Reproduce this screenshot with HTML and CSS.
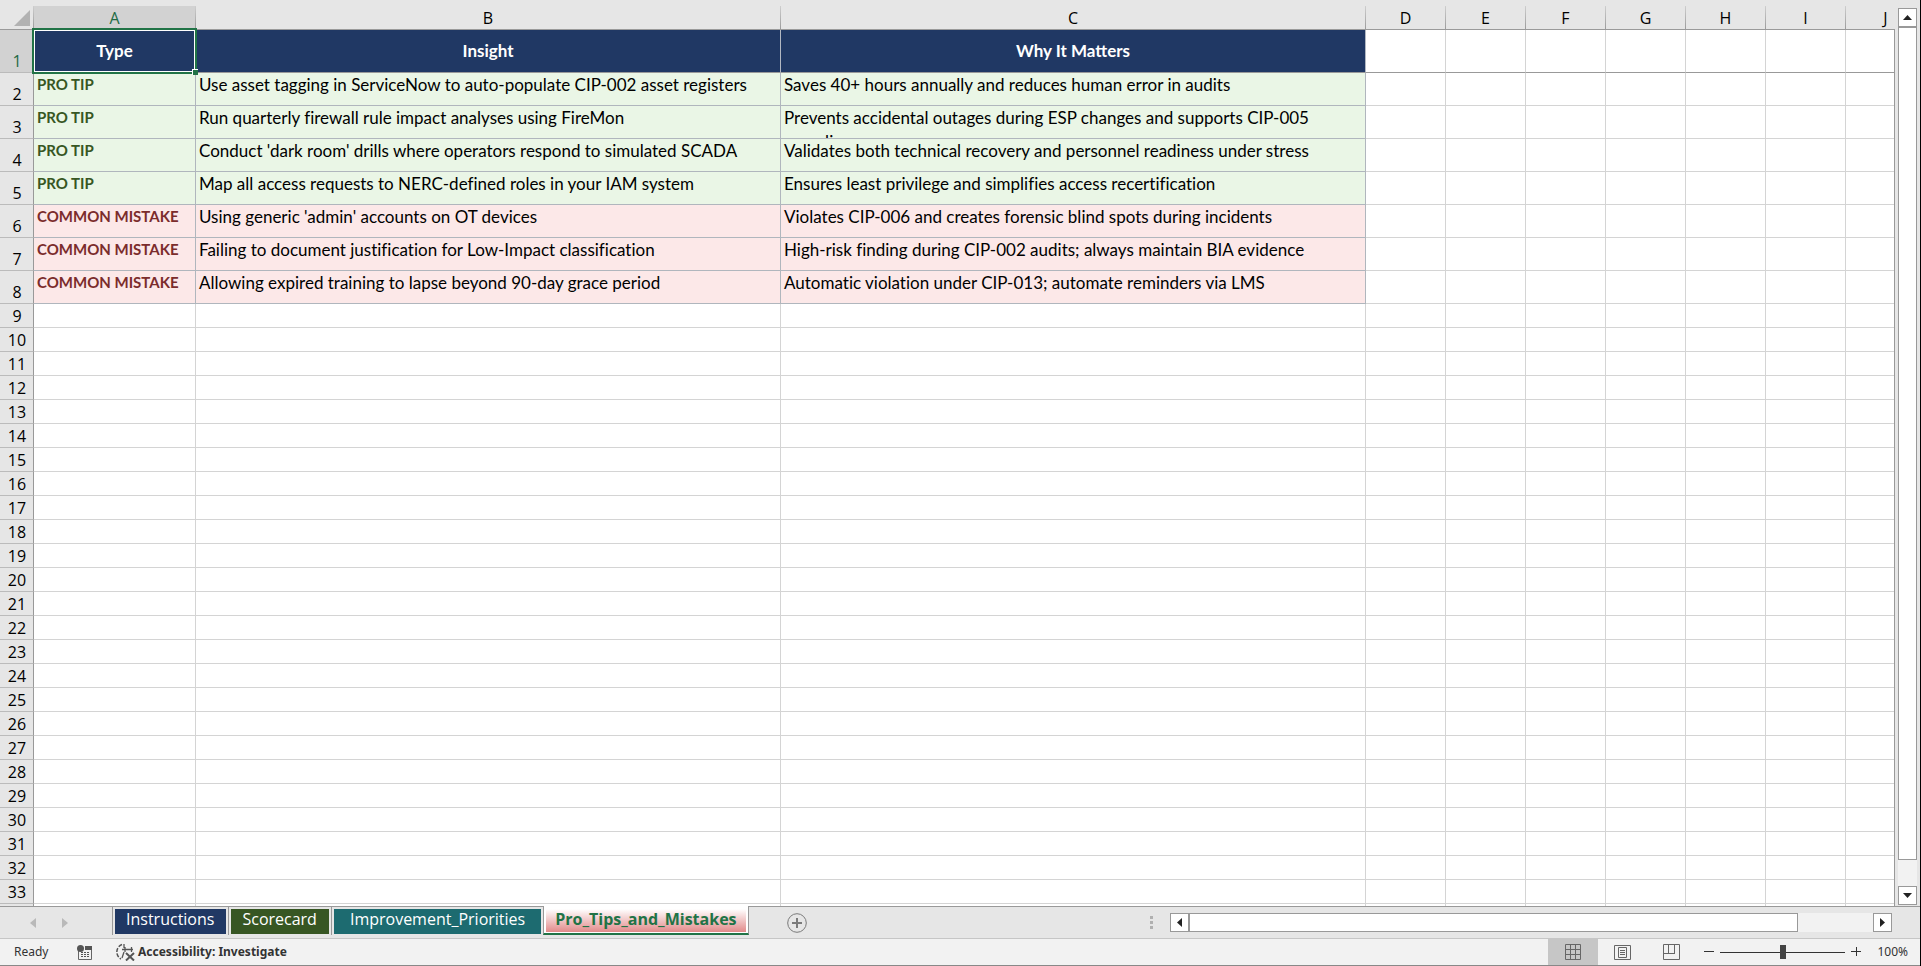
FILE: index.html
```
<!DOCTYPE html>
<html lang="en">
<head>
<meta charset="utf-8">
<title>Pro_Tips_and_Mistakes</title>
<link rel="stylesheet" href="styles.css">
</head>
<body>
<main class="workspace">
  <div class="sheet">
    <table class="grid">
      <colgroup><col class="col-num"><col class="col-type"><col class="col-text"><col class="col-text"><col class="col-std"><col class="col-std"><col class="col-std"><col class="col-std"><col class="col-std"><col class="col-std"><col class="col-std"></colgroup>
      <thead>
        <tr><th class="corner"><svg width="16" height="16" viewBox="0 0 16 16" aria-hidden="true"><path d="M16 0V16H0z" fill="#b2b2b2"/></svg></th><th class="active">A</th><th>B</th><th>C</th><th>D</th><th>E</th><th>F</th><th>G</th><th>H</th><th>I</th><th>J</th></tr>
      </thead>
      <tbody>
        <tr class="title"><th class="active">1</th><td class="selected">Type<span class="handle"></span></td><td>Insight</td><td>Why It Matters</td><td><td><td><td><td><td><td></tr>
        <tr class="data tip"><th>2</th><td><div>PRO TIP</div></td><td><div>Use asset tagging in ServiceNow to auto-populate CIP-002 asset registers</div></td><td><div>Saves 40+ hours annually and reduces human error in audits</div></td><td><td><td><td><td><td><td></tr>
        <tr class="data tip"><th>3</th><td><div>PRO TIP</div></td><td><div>Run quarterly firewall rule impact analyses using FireMon</div></td><td><div>Prevents accidental outages during ESP changes and supports CIP-005 compliance</div></td><td><td><td><td><td><td><td></tr>
        <tr class="data tip"><th>4</th><td><div>PRO TIP</div></td><td><div>Conduct 'dark room' drills where operators respond to simulated SCADA</div></td><td><div>Validates both technical recovery and personnel readiness under stress</div></td><td><td><td><td><td><td><td></tr>
        <tr class="data tip"><th>5</th><td><div>PRO TIP</div></td><td><div>Map all access requests to NERC-defined roles in your IAM system</div></td><td><div>Ensures least privilege and simplifies access recertification</div></td><td><td><td><td><td><td><td></tr>
        <tr class="data mistake"><th>6</th><td><div>COMMON MISTAKE</div></td><td><div>Using generic 'admin' accounts on OT devices</div></td><td><div>Violates CIP-006 and creates forensic blind spots during incidents</div></td><td><td><td><td><td><td><td></tr>
        <tr class="data mistake"><th>7</th><td><div>COMMON MISTAKE</div></td><td><div>Failing to document justification for Low-Impact classification</div></td><td><div>High-risk finding during CIP-002 audits; always maintain BIA evidence</div></td><td><td><td><td><td><td><td></tr>
        <tr class="data mistake"><th>8</th><td><div>COMMON MISTAKE</div></td><td><div>Allowing expired training to lapse beyond 90-day grace period</div></td><td><div>Automatic violation under CIP-013; automate reminders via LMS</div></td><td><td><td><td><td><td><td></tr>
        <tr><th>9</th><td><td><td><td><td><td><td><td><td><td></tr>
        <tr><th>10</th><td><td><td><td><td><td><td><td><td><td></tr>
        <tr><th>11</th><td><td><td><td><td><td><td><td><td><td></tr>
        <tr><th>12</th><td><td><td><td><td><td><td><td><td><td></tr>
        <tr><th>13</th><td><td><td><td><td><td><td><td><td><td></tr>
        <tr><th>14</th><td><td><td><td><td><td><td><td><td><td></tr>
        <tr><th>15</th><td><td><td><td><td><td><td><td><td><td></tr>
        <tr><th>16</th><td><td><td><td><td><td><td><td><td><td></tr>
        <tr><th>17</th><td><td><td><td><td><td><td><td><td><td></tr>
        <tr><th>18</th><td><td><td><td><td><td><td><td><td><td></tr>
        <tr><th>19</th><td><td><td><td><td><td><td><td><td><td></tr>
        <tr><th>20</th><td><td><td><td><td><td><td><td><td><td></tr>
        <tr><th>21</th><td><td><td><td><td><td><td><td><td><td></tr>
        <tr><th>22</th><td><td><td><td><td><td><td><td><td><td></tr>
        <tr><th>23</th><td><td><td><td><td><td><td><td><td><td></tr>
        <tr><th>24</th><td><td><td><td><td><td><td><td><td><td></tr>
        <tr><th>25</th><td><td><td><td><td><td><td><td><td><td></tr>
        <tr><th>26</th><td><td><td><td><td><td><td><td><td><td></tr>
        <tr><th>27</th><td><td><td><td><td><td><td><td><td><td></tr>
        <tr><th>28</th><td><td><td><td><td><td><td><td><td><td></tr>
        <tr><th>29</th><td><td><td><td><td><td><td><td><td><td></tr>
        <tr><th>30</th><td><td><td><td><td><td><td><td><td><td></tr>
        <tr><th>31</th><td><td><td><td><td><td><td><td><td><td></tr>
        <tr><th>32</th><td><td><td><td><td><td><td><td><td><td></tr>
        <tr><th>33</th><td><td><td><td><td><td><td><td><td><td></tr>
        <tr><th></th><td><td><td><td><td><td><td><td><td><td></tr>
      </tbody>
    </table>
  </div>
  <div class="vscroll">
    <button class="arrow" aria-label="Scroll up"><svg width="9" height="5" viewBox="0 0 9 5"><path d="M0 5L4.500 0L9 5z" fill="#222"/></svg></button>
    <div class="track"><div class="thumb"></div></div>
    <button class="arrow" aria-label="Scroll down"><svg width="9" height="5" viewBox="0 0 9 5"><path d="M0 0L4.500 5L9 0z" fill="#222"/></svg></button>
  </div>
</main>
<nav class="tabbar">
  <div class="tabnav">
    <button aria-label="Previous sheet"><svg width="6" height="10" viewBox="0 0 6 10"><path d="M6 0V10L0 5z" fill="#b9b9b9"/></svg></button>
    <button aria-label="Next sheet"><svg width="6" height="10" viewBox="0 0 6 10"><path d="M0 0V10L6 5z" fill="#b9b9b9"/></svg></button>
  </div>
  <div class="tabs">
    <button class="tab"><span class="navy">Instructions</span></button>
    <button class="tab"><span class="green">Scorecard</span></button>
    <button class="tab"><span class="teal">Improvement_Priorities</span></button>
    <button class="tab current"><span>Pro_Tips_and_Mistakes</span></button>
    <div class="rest"><button class="add" aria-label="New sheet"><svg width="20" height="20" viewBox="0 0 20 20" fill="none" stroke="#7a7a7a"><circle cx="10" cy="10" r="9.300"/><path d="M5 10h10M10 5v10" stroke-width="2"/></svg></button></div>
  </div>
  <div class="hpart">
    <svg class="grip" width="3" height="13" viewBox="0 0 3 13" fill="#b0b0b0" aria-hidden="true"><path d="M0 0h3v3H0zM0 5h3v3H0zM0 10h3v3H0z"/></svg>
    <div class="hscroll">
      <button class="arrow" aria-label="Scroll left"><svg width="5" height="9" viewBox="0 0 5 9"><path d="M5 0V9L0 4.500z" fill="#222"/></svg></button>
      <div class="track"><div class="thumb"></div></div>
      <button class="arrow" aria-label="Scroll right"><svg width="5" height="9" viewBox="0 0 5 9"><path d="M0 0V9L5 4.500z" fill="#222"/></svg></button>
    </div>
  </div>
</nav>
<footer class="status">
  <span class="ready">Ready</span>
  <button class="macro" aria-label="Record macro"><svg width="15" height="15" viewBox="0 0 15 15"><path d="M1.500 6V14.500H14.500V3" fill="none" stroke="#666"/><path d="M8 1h7v4H8z" fill="#555"/><circle cx="3.500" cy="3.500" r="3.500" fill="#555"/><path d="M4 7.500h9M4 9.500h9M4 11.500h9" stroke="#555" stroke-dasharray="2 1"/></svg></button>
  <button class="access"><svg width="20" height="18" viewBox="0 0 20 18" fill="none" stroke="#555"><path d="M6 1.500A8 8 0 0 0 5 16" stroke-dasharray="4 1.500" stroke-width="1.500"/><path d="M6 6.500h11M9 4v5M15.500 4v5M8 1v4M8 9l-2 6" stroke-width="1.300"/><path d="M10 10l8 7.500M18 10l-8 7.500" stroke-width="2"/></svg>Accessibility: Investigate</button>
  <div class="views">
    <button class="view on" aria-label="Normal"><svg width="16" height="16" viewBox="0 0 16 16" fill="none" stroke="#666"><path d="M.5.5h15v15H.5zM5.500 0v16M10.500 0v16M0 5.500h16M0 10.500h16"/></svg></button>
    <button class="view" aria-label="Page layout"><svg width="17" height="15" viewBox="0 0 17 15" fill="none" stroke="#666"><path d="M.5.5h16v14H.5zM4.500 2.500h8v10h-8zM6 5.500h5M6 7.500h5M6 9.500h5"/></svg></button>
    <button class="view" aria-label="Page break preview"><svg width="17" height="16" viewBox="0 0 17 16" fill="none" stroke="#666"><path d="M.5.5h16v15H.5zM5.500 0v9.500M0 9.500h11.500M11.500 0v10"/></svg></button>
    <button class="step" aria-label="Zoom out"><svg width="10" height="10" viewBox="0 0 10 10"><path d="M0 4.500h10" stroke="#333"/></svg></button>
    <input class="zoom" type="range" min="0" max="100" value="50" aria-label="Zoom">
    <button class="step" aria-label="Zoom in"><svg width="10" height="10" viewBox="0 0 10 10"><path d="M0 4.500h10M5.500 0v9" stroke="#333"/></svg></button>
    <button class="percent">100%</button>
  </div>
</footer>
</body>
</html>
```
FILE: styles.css
```
* { box-sizing: border-box; }
html, body { height: 100%; }
body {
  margin: 0;
  display: flex;
  flex-direction: column;
  overflow: hidden;
  background: #e6e6e6;
  border-right: 1px solid #000;
  font-family: "Open Sans", "Noto Sans", sans-serif;
  color: #000;
}
button {
  margin: 0;
  padding: 0;
  border: 0;
  background: none;
  font: inherit;
  color: inherit;
  display: flex;
  align-items: center;
  justify-content: center;
}

/* Worksheet */
.workspace { flex: 1; min-height: 0; display: flex; }
.sheet {
  flex: 1;
  min-width: 0;
  overflow: hidden;
  padding-top: 6px;
  position: relative;
}
.sheet::after {
  content: "";
  position: absolute;
  top: 29px;
  right: 0;
  bottom: 0;
  border-right: 1px solid #999;
}
.grid {
  table-layout: fixed;
  width: 1926px;
  border-collapse: separate;
  border-spacing: 0;
}
.col-num { width: 34px; }
.col-type { width: 162px; }
.col-text { width: 585px; }
.col-std { width: 80px; }
.grid th {
  height: 24px;
  padding: 0;
  font-weight: 400;
  font-size: 16px;
  line-height: 20px;
  background: #e6e6e6;
}
.grid td {
  padding: 0;
  background: #fff;
  border-right: 1px solid #d4d4d4;
  border-bottom: 1px solid #d4d4d4;
}
thead th {
  border-right: 1px solid;
  border-bottom: 1px solid #999;
  border-image: linear-gradient(#d0d0d0, #999) 1;
}
.grid tbody th {
  vertical-align: bottom;
  padding: 0 0 1px 1px;
  border-right: 1px solid #999;
  border-bottom: 1px solid #bbb;
}
.grid th.active { background: #d2d2d2; color: #1e6b45; }
.grid .corner { background: #e6e6e6; text-align: right; padding: 0 3px 3px 0; vertical-align: bottom; }
.corner svg { display: block; margin-left: auto; }
.title td { height: 43px; border-bottom-color: #999; }
.title td:nth-child(-n+4) {
  background: #203864;
  color: #fff;
  font: 700 17px/20px Lato, sans-serif;
  text-align: center;
  border-right-color: #b2b8c2;
}
.title th { border-bottom-color: #999; }
.grid .selected { position: relative; }
.selected::before {
  content: "";
  position: absolute;
  inset: -2px -2px -2px -2px;
  border: 2px solid #217346;
  box-shadow: inset 0 0 0 1px #fff;
}
.handle {
  position: absolute;
  right: -3px;
  bottom: -3px;
  width: 6px;
  height: 6px;
  background: #217346;
  border: 1px solid #fff;
  border-width: 1px 0 0 1px;
}
.data th, .data td { height: 33px; }
.data td { vertical-align: top; }
.data td:nth-child(-n+4) { border-color: #b0b6bd; }
.data div {
  height: 32px;
  overflow: hidden;
  padding: 0 3px;
  font: 17px/24px Lato, sans-serif;
  font-variant-ligatures: none;
}
.data td:nth-child(2) div { font: 700 15px/22px Lato, sans-serif; }
.tip td:nth-child(-n+4) { background: #eaf6e6; }
.mistake td:nth-child(-n+4) { background: #fce8e8; }
.tip td:nth-child(2) { color: #375623; }
.mistake td:nth-child(2) { color: #7b2c2c; }

/* Scroll bars */
.track { flex: 1; background: #f2f2f2; }
.thumb { background: #fff; border: 1px solid #999; }
.arrow { width: 19px; height: 19px; flex: none; background: #fff; border: 1px solid #999; }
.vscroll { width: 25px; padding: 8px 3px 1px; display: flex; flex-direction: column; }
.vscroll .thumb { height: 97%; }
.hpart { width: 773px; display: flex; align-items: center; gap: 17px; padding-left: 3px; border-top: 1px solid #999; }
.hscroll { flex: 1; display: flex; margin-right: 28px; }
.hscroll .thumb { width: 89%; height: 19px; }

/* Sheet tabs */
.tabbar { height: 32px; display: flex; }
.tabnav { width: 112px; display: flex; align-items: center; padding-left: 30px; gap: 26px; border-top: 1px solid #999; }
.tabs { flex: 1; display: flex; }
.tab {
  align-items: stretch;
  height: 29px;
  padding: 2px 2px 1px;
  border-top: 1px solid #999;
  border-left: 1px solid #999;
  font-size: 16px;
  line-height: 20px;
  color: #fff;
}
.tab span { padding: 0 12px 0 11px; }
.tab .teal { padding: 0 16px; }
.navy { background: #203864; }
.green { background: #375623; }
.teal { background: #1d6b70; }
.tab.current {
  padding: 3px 2px 1px;
  background: #fff;
  border-top: 0;
  border-right: 1px solid #999;
  border-bottom: 2px solid #217346;
  color: #217346;
  font-weight: 700;
}
.tab.current span { padding: 0 9px; background: linear-gradient(#fff, #e28a8a); }
.rest { flex: 1; border-top: 1px solid #999; display: flex; align-items: center; padding-left: 38px; }

/* Status bar */
.status {
  height: 28px;
  display: flex;
  align-items: center;
  background: #f2f2f2;
  border-top: 1px solid #c6c6c6;
  border-bottom: 1px solid #888;
  font-family: "Noto Sans", sans-serif;
  font-size: 12px;
  line-height: 16px;
  color: #333;
}
.ready { width: 77px; padding-left: 14px; }
.macro { margin-right: 24px; }
.access { font-weight: 700; gap: 2px; }
.views { margin-left: auto; height: 100%; display: flex; align-items: center; }
.view { width: 49px; height: 100%; }
.view.on { width: 50px; background: #c6c6c6; }
.step { width: 10px; height: 20px; margin: 0 6px; }
.view + .step { margin-left: 8px; }
.zoom { appearance: none; width: 125px; height: 14px; margin: 0; background: linear-gradient(#333, #333) center / 100% 1px no-repeat; }
.zoom::-webkit-slider-thumb { appearance: none; width: 6px; height: 14px; background: #444; }
.percent { padding: 0 12px 0 10px; }
```
